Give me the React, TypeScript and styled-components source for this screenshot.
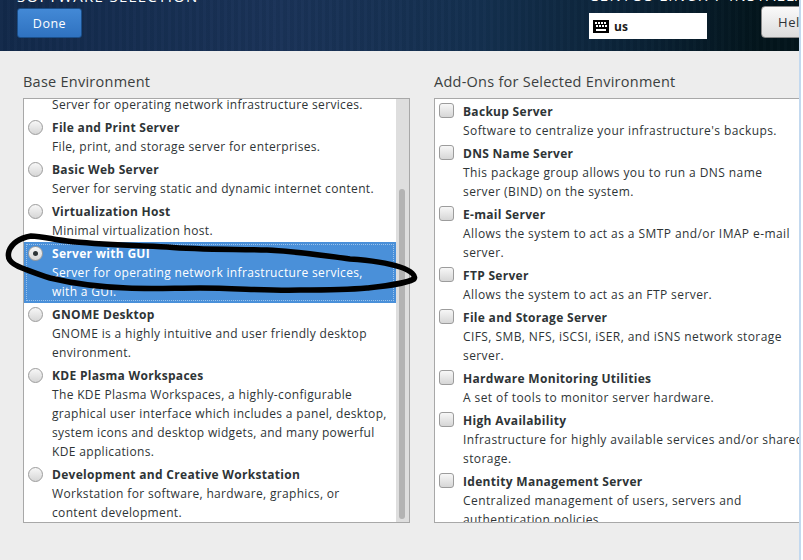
import React from "react";
import styled, { createGlobalStyle } from "styled-components";

const GlobalStyle = createGlobalStyle`
  html, body {
    margin: 0;
    padding: 0;
    background: #fff;
  }
  body {
    font-family: "Open Sans", "Liberation Sans", sans-serif;
    color: #2e3436;
  }
`;

const Page = styled.div`
  position: relative;
  width: 803px;
  height: 560px;
  display: flex;
  overflow: hidden;
`;

const Window = styled.div`
  width: 799px;
  flex: none;
  display: flex;
  flex-direction: column;
  background: #ededed;
`;

const EdgeStripe = styled.div`
  width: 2px;
  flex: none;
  background: #c3d9ef;
`;

const Header = styled.header`
  height: 51px;
  flex: none;
  box-sizing: border-box;
  padding: 0 0 13px 17px;
  display: flex;
  justify-content: space-between;
  align-items: flex-end;
  overflow: hidden;
  background:
    repeating-linear-gradient(90deg, rgba(255, 255, 255, 0.012) 0 3px, rgba(0, 0, 0, 0.03) 3px 7px),
    linear-gradient(90deg, #12294a 0%, #1a3358 35%, #14304f 60%, #0a2236 80%, #03151c 95%);
`;

const HeaderGroup = styled.div`
  display: flex;
  flex-direction: column;
  align-items: flex-start;
  flex: none;
`;

const HeaderTitle = styled.div<{ $gap: number }>`
  width: 0;
  color: #fff;
  font-size: 15px;
  line-height: 17px;
  letter-spacing: 1.3px;
  white-space: nowrap;
  margin-bottom: ${(p) => p.$gap}px;
`;

const HeaderControls = styled.div`
  display: flex;
  align-items: flex-end;
  gap: 54px;
`;

const DoneButton = styled.button`
  width: 65px;
  height: 30px;
  padding: 0;
  border: 1px solid #1b4f8a;
  border-radius: 3px;
  background: linear-gradient(#4389d6, #2f72c0);
  color: #fff;
  font: 12.5px "Open Sans", sans-serif;
  letter-spacing: 0.5px;
`;

const HelpButton = styled.button`
  width: 70px;
  height: 32px;
  padding: 0 0 0 16px;
  text-align: left;
  margin-right: -32px;
  border: 1px solid #8a8a8a;
  border-radius: 4px;
  background: linear-gradient(#fafafa, #dcdcdc);
  color: #2e3436;
  font: 13px "Open Sans", sans-serif;
  letter-spacing: 0.6px;
`;

const KeyboardField = styled.div`
  width: 118px;
  height: 26px;
  margin-bottom: -1px;
  box-sizing: border-box;
  padding-left: 4px;
  display: flex;
  align-items: center;
  gap: 5px;
  background: #fff;
  color: #1a1a1a;
  font-size: 12px;
  font-weight: 700;
`;

const Columns = styled.main`
  flex: 1;
  min-height: 0;
  padding: 21px 0 37px 23px;
  display: grid;
  grid-template-columns: 387px 365px;
  column-gap: 24px;
`;

const Column = styled.section`
  display: flex;
  flex-direction: column;
  min-height: 0;
`;

const ColumnLabel = styled.h2`
  margin: 0 0 6px;
  font-size: 14.5px;
  font-weight: 400;
  line-height: 20px;
  color: #3b3f40;
  letter-spacing: 0.25px;
`;

const Panel = styled.div<{ $open?: boolean }>`
  flex: 1;
  min-height: 0;
  display: flex;
  background: #fff;
  border: 1px solid #a8a8a8;
  border-right-width: ${(p) => (p.$open ? 0 : 1)}px;
  overflow: hidden;
`;

const List = styled.ul<{ $fromBottom?: boolean }>`
  flex: 1;
  min-width: 0;
  margin: 0 0 ${(p) => (p.$fromBottom ? "-2px" : "0")};
  padding: ${(p) => (p.$fromBottom ? "0" : "1px 0 0")};
  list-style: none;
  display: flex;
  flex-direction: column;
  justify-content: ${(p) => (p.$fromBottom ? "flex-end" : "flex-start")};
`;

const Row = styled.li<{ $selected?: boolean }>`
  flex: none;
  box-sizing: border-box;
  display: grid;
  grid-template-columns: 16px 1fr;
  column-gap: 8px;
  padding: 2px 0 2px 4px;
  background: ${(p) => (p.$selected ? "#4a90d9" : "transparent")};
  color: ${(p) => (p.$selected ? "#fff" : "#2e3436")};
  outline: ${(p) => (p.$selected ? "1px dotted rgba(255, 255, 255, 0.45)" : "none")};
  outline-offset: -3px;
`;

const Radio = styled.span<{ $on?: boolean }>`
  width: 15px;
  height: 15px;
  margin-top: 2px;
  box-sizing: border-box;
  border: 1px solid #9c9c9c;
  border-radius: 50%;
  background: linear-gradient(#f7f7f7, #d6d6d6);
  display: flex;
  align-items: center;
  justify-content: center;

  &::after {
    content: "";
    display: ${(p) => (p.$on ? "block" : "none")};
    width: 5px;
    height: 5px;
    border-radius: 50%;
    background: #2e3436;
  }
`;

const Checkbox = styled.span`
  width: 15px;
  height: 15px;
  margin-top: 1px;
  box-sizing: border-box;
  border: 1px solid #9c9c9c;
  border-radius: 3px;
  background: linear-gradient(#f7f7f7, #d6d6d6);
`;

const RowText = styled.div`
  min-width: 0;
`;

const RowTitle = styled.div`
  font-size: 12px;
  font-weight: 700;
  line-height: 19px;
  letter-spacing: 0.3px;
  white-space: nowrap;
`;

const RowDesc = styled.div<{ $loose?: boolean }>`
  font-size: 12px;
  line-height: 19px;
  letter-spacing: ${(p) => (p.$loose ? 0.42 : 0.34)}px;
  white-space: nowrap;
`;

const Scrollbar = styled.div`
  width: 13px;
  flex: none;
  box-sizing: border-box;
  padding: 0 4px 3px 3px;
  display: flex;
  flex-direction: column;
  justify-content: flex-end;
  background: #dedede;
`;

const ScrollThumb = styled.div`
  height: 330px;
  background: #b3b3b3;
  border-radius: 4px;
`;

const Scribble = styled.svg`
  position: absolute;
  left: 0;
  top: 0;
  pointer-events: none;
`;

const KeyboardIcon = () => (
  <svg width="16" height="13" viewBox="0 0 16 13" shapeRendering="crispEdges">
    <rect width="16" height="13" fill="#000" />
    {[2, 5, 8, 11].map((x) => (
      <rect key={`a${x}`} x={x} y="2" width="2" height="2" fill="#fff" />
    ))}
    {[3, 6, 9, 12].map((x) => (
      <rect key={`b${x}`} x={x} y="5" width="2" height="2" fill="#fff" />
    ))}
    <rect x="3" y="9" width="10" height="2" fill="#fff" />
  </svg>
);

const environments = [
  { title: "", desc: ["Server for operating network infrastructure services."] },
  { title: "File and Print Server", desc: ["File, print, and storage server for enterprises."] },
  { title: "Basic Web Server", desc: ["Server for serving static and dynamic internet content."] },
  { title: "Virtualization Host", desc: ["Minimal virtualization host."] },
  { title: "Server with GUI", desc: ["Server for operating network infrastructure services,", "with a GUI."], selected: true },
  { title: "GNOME Desktop", desc: ["GNOME is a highly intuitive and user friendly desktop", "environment."] },
  {
    title: "KDE Plasma Workspaces",
    desc: [
      "The KDE Plasma Workspaces, a highly-configurable",
      "graphical user interface which includes a panel, desktop,",
      "system icons and desktop widgets, and many powerful",
      "KDE applications.",
    ],
  },
  { title: "Development and Creative Workstation", desc: ["Workstation for software, hardware, graphics, or", "content development."] },
];

const addons = [
  { title: "Backup Server", desc: ["Software to centralize your infrastructure's backups."] },
  { title: "DNS Name Server", desc: ["This package group allows you to run a DNS name", "server (BIND) on the system."] },
  { title: "E-mail Server", desc: ["Allows the system to act as a SMTP and/or IMAP e-mail", "server."] },
  { title: "FTP Server", desc: ["Allows the system to act as an FTP server."] },
  { title: "File and Storage Server", desc: ["CIFS, SMB, NFS, iSCSI, iSER, and iSNS network storage", "server."] },
  { title: "Hardware Monitoring Utilities", desc: ["A set of tools to monitor server hardware."] },
  { title: "High Availability", desc: ["Infrastructure for highly available services and/or shared", "storage."] },
  { title: "Identity Management Server", desc: ["Centralized management of users, servers and", "authentication policies."] },
];

const App = () => {
  return (
    <Page>
      <GlobalStyle />
      <Window>
        <Header>
          <HeaderGroup>
            <HeaderTitle $gap={3}>SOFTWARE SELECTION</HeaderTitle>
            <DoneButton>Done</DoneButton>
          </HeaderGroup>
          <HeaderGroup>
            <HeaderTitle $gap={2}>CENTOS LINUX 7 INSTALLATION</HeaderTitle>
            <HeaderControls>
              <KeyboardField>
                <KeyboardIcon />
                us
              </KeyboardField>
              <HelpButton>Help!</HelpButton>
            </HeaderControls>
          </HeaderGroup>
        </Header>
        <Columns>
          <Column>
            <ColumnLabel>Base Environment</ColumnLabel>
            <Panel>
              <List $fromBottom>
                {environments.map((env) => (
                  <Row key={env.desc[0]} $selected={env.selected}>
                    {env.title ? <Radio $on={env.selected} /> : <span />}
                    <RowText>
                      {env.title && <RowTitle>{env.title}</RowTitle>}
                      {env.desc.map((line) => (
                        <RowDesc key={line}>{line}</RowDesc>
                      ))}
                    </RowText>
                  </Row>
                ))}
              </List>
              <Scrollbar>
                <ScrollThumb />
              </Scrollbar>
            </Panel>
          </Column>
          <Column>
            <ColumnLabel>Add-Ons for Selected Environment</ColumnLabel>
            <Panel $open>
              <List>
                {addons.map((addon) => (
                  <Row key={addon.title}>
                    <Checkbox />
                    <RowText>
                      <RowTitle>{addon.title}</RowTitle>
                      {addon.desc.map((line) => (
                        <RowDesc key={line} $loose>{line}</RowDesc>
                      ))}
                    </RowText>
                  </Row>
                ))}
              </List>
            </Panel>
          </Column>
        </Columns>
      </Window>
      <EdgeStripe />
      <Scribble width="803" height="560" viewBox="0 0 803 560" fill="none">
        <path
          d="M31 236 C20 238 12 243 9 251 C7 258 9 263 22 268 C30 271 40 275 50 278 C75 284 100 287 127 288 C150 289 175 288 200 288 C235 288 270 291 300 290 C325 290 345 290 367 288 C385 286 405 284 414 279 C416 276 412 271 400 267 C385 262 365 260 350 259 C325 256 295 251 267 250 C235 249 200 250 167 247 C135 245 100 245 67 241 C55 240 42 236 31 236 Z"
          stroke="#000"
          strokeWidth="5.5"
          strokeLinejoin="round"
        />
      </Scribble>
    </Page>
  );
};

export default App;
